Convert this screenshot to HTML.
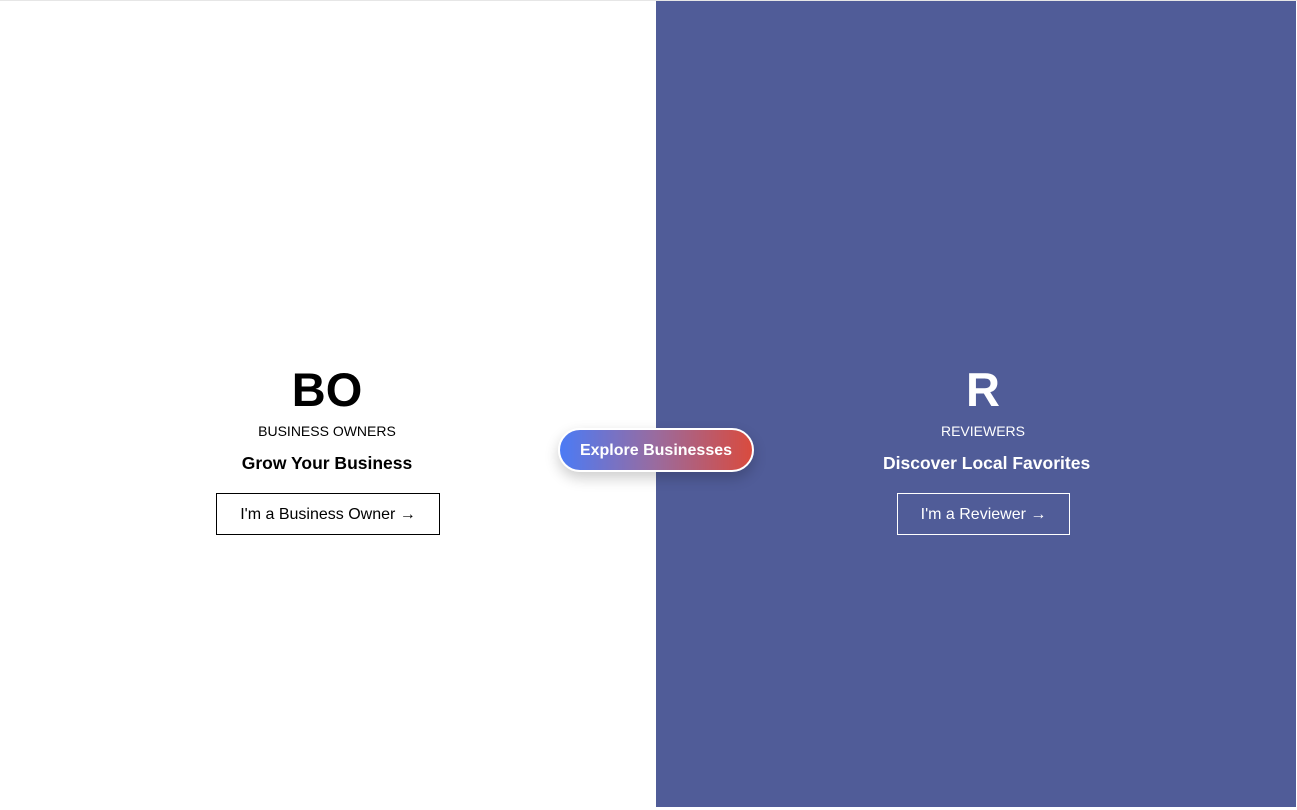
<!DOCTYPE html>
<html><head><style>
html,body{margin:0;padding:0;width:1297px;height:810px;overflow:hidden;background:#fff;font-family:"Liberation Sans",sans-serif;}
.top{position:absolute;left:0;top:0;width:1297px;height:1px;background:#e6e6e6;}
.right{position:absolute;left:656px;top:1px;width:640px;height:806px;background:#505c98;}
.c{position:absolute;text-align:center;white-space:nowrap;}
.big{font-size:47px;font-weight:bold;top:362px;}
.lab{font-size:14px;top:423px;}
.h{font-size:17.5px;font-weight:bold;top:453px;}
.btn{position:absolute;top:493px;height:40px;border:1px solid #000;font-size:16px;line-height:42px;text-align:center;box-sizing:content-box;}
.pill{position:absolute;left:558px;top:428px;width:192px;height:40px;border:2px solid #fff;border-radius:22px;background:linear-gradient(90deg,#4b7bf5,#9a6b9e 50%,#d94b3e);color:#fff;font-weight:bold;font-size:16px;line-height:42px;text-align:center;box-shadow:0 6px 14px rgba(0,0,0,.2);}
</style></head><body>
<div class="top"></div>
<div class="right"></div>
<div class="c big" style="left:227px;width:200px;">BO</div>
<div class="c lab" style="left:227px;width:200px;">BUSINESS OWNERS</div>
<div class="c h" style="left:227px;width:200px;">Grow Your Business</div>
<div class="btn" style="left:216px;width:222px;">I'm a Business Owner →</div>
<div class="c big" style="left:883px;width:200px;color:#fff;">R</div>
<div class="c lab" style="left:883px;width:200px;color:#fff;">REVIEWERS</div>
<div class="c h" style="left:883px;width:200px;color:#fff;">Discover Local Favorites</div>
<div class="btn" style="left:897px;width:171px;border-color:#fff;color:#fff;">I'm a Reviewer →</div>
<div class="pill">Explore Businesses</div>
</body></html>
